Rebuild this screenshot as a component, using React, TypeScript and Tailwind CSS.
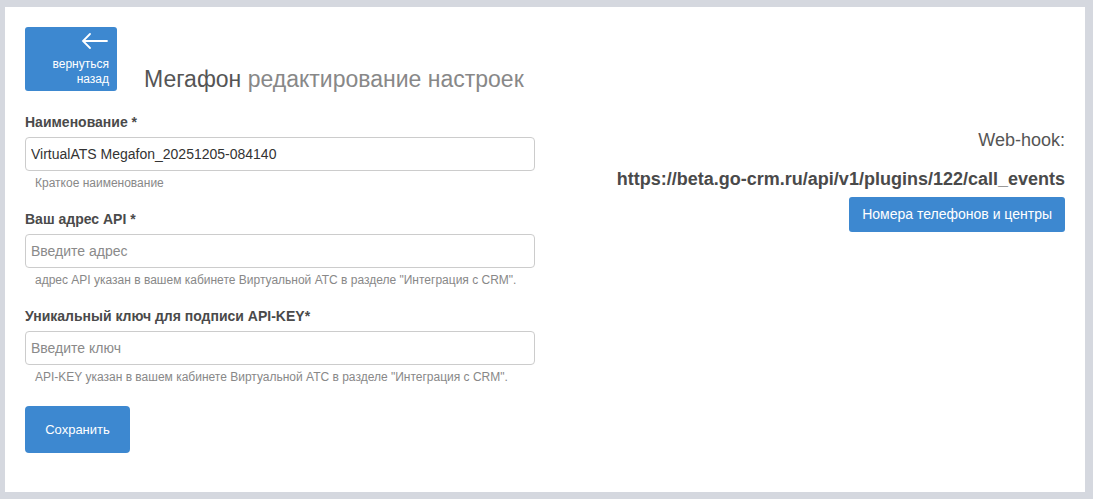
import React from "react";

const font = { fontFamily: '"Liberation Sans", Arial, sans-serif' };

function Field({ label, value, placeholder, help }: { label: string; value?: string; placeholder?: string; help: string }) {
    return (
        <div className="flex flex-col">
            <label className="text-[14px] leading-[20px] font-bold text-[#4a4a4a] mb-[5px]">{label}</label>
            <input
                defaultValue={value}
                placeholder={placeholder}
                className="h-[34px] w-full border border-[#cccccc] rounded-[4px] px-[5px] text-[14px] text-[#333] placeholder:text-[#8a8a8a] outline-none bg-white"
            />
            <p className="text-[12px] leading-[16px] text-[#888] pl-[10px] mt-[4px]">{help}</p>
        </div>
    );
}

export default function App() {
    return (
        <div className="min-h-[499px] bg-[#d5d8df] pl-[5px] pt-[7px] pr-[8px] pb-[7px]" style={font}>
            <div className="bg-white h-[485px] px-[20px] pt-[20px]">
                <div className="flex items-end gap-[27px]">
                    <button className="w-[92px] h-[64px] bg-[#3d88d0] rounded-[3px] flex flex-col items-end pr-[8px] pt-[6px] text-white">
                        <svg width="28" height="16" viewBox="0 0 28 16" fill="none" stroke="white" strokeWidth="1.8" strokeLinecap="round">
                            <path d="M26 8H2M9 1L2 8l7 7" />
                        </svg>
                        <span className="text-[12px] leading-[15px] mt-[8px] text-right">вернуться<br />назад</span>
                    </button>
                    <h1 className="text-[23px] leading-[28px] mb-[-2px] text-[#555]">
                        Мегафон <span className="text-[#888]">редактирование настроек</span>
                    </h1>
                </div>
                <div className="flex justify-between mt-[21px]">
                    <div className="w-[510px] flex flex-col">
                        <Field label="Наименование *" value="VirtualATS Megafon_20251205-084140" help="Краткое наименование" />
                        <div className="mt-[18px]">
                            <Field label="Ваш адрес API *" placeholder="Введите адрес" help={'адрес API указан в вашем кабинете Виртуальной АТС в разделе "Интеграция с CRM".'} />
                        </div>
                        <div className="mt-[18px]">
                            <Field label="Уникальный ключ для подписи API-KEY*" placeholder="Введите ключ" help={'API-KEY указан в вашем кабинете Виртуальной АТС в разделе "Интеграция с CRM".'} />
                        </div>
                        <div className="mt-[21px]">
                            <button className="w-[105px] h-[47px] bg-[#3d88d0] rounded-[4px] text-white text-[13px]">Сохранить</button>
                        </div>
                    </div>
                    <div className="flex flex-col items-end pt-[17px]">
                        <p className="text-[18px] leading-[22px] text-[#555]">Web-hook:</p>
                        <p className="text-[18px] leading-[22px] font-bold text-[#4a4a4a] mt-[17px]">https://beta.go-crm.ru/api/v1/plugins/122/call_events</p>
                        <button className="mt-[7px] h-[35px] px-[13px] bg-[#3d88d0] rounded-[3px] text-white text-[14px]">Номера телефонов и центры</button>
                    </div>
                </div>
            </div>
        </div>
    );
}
